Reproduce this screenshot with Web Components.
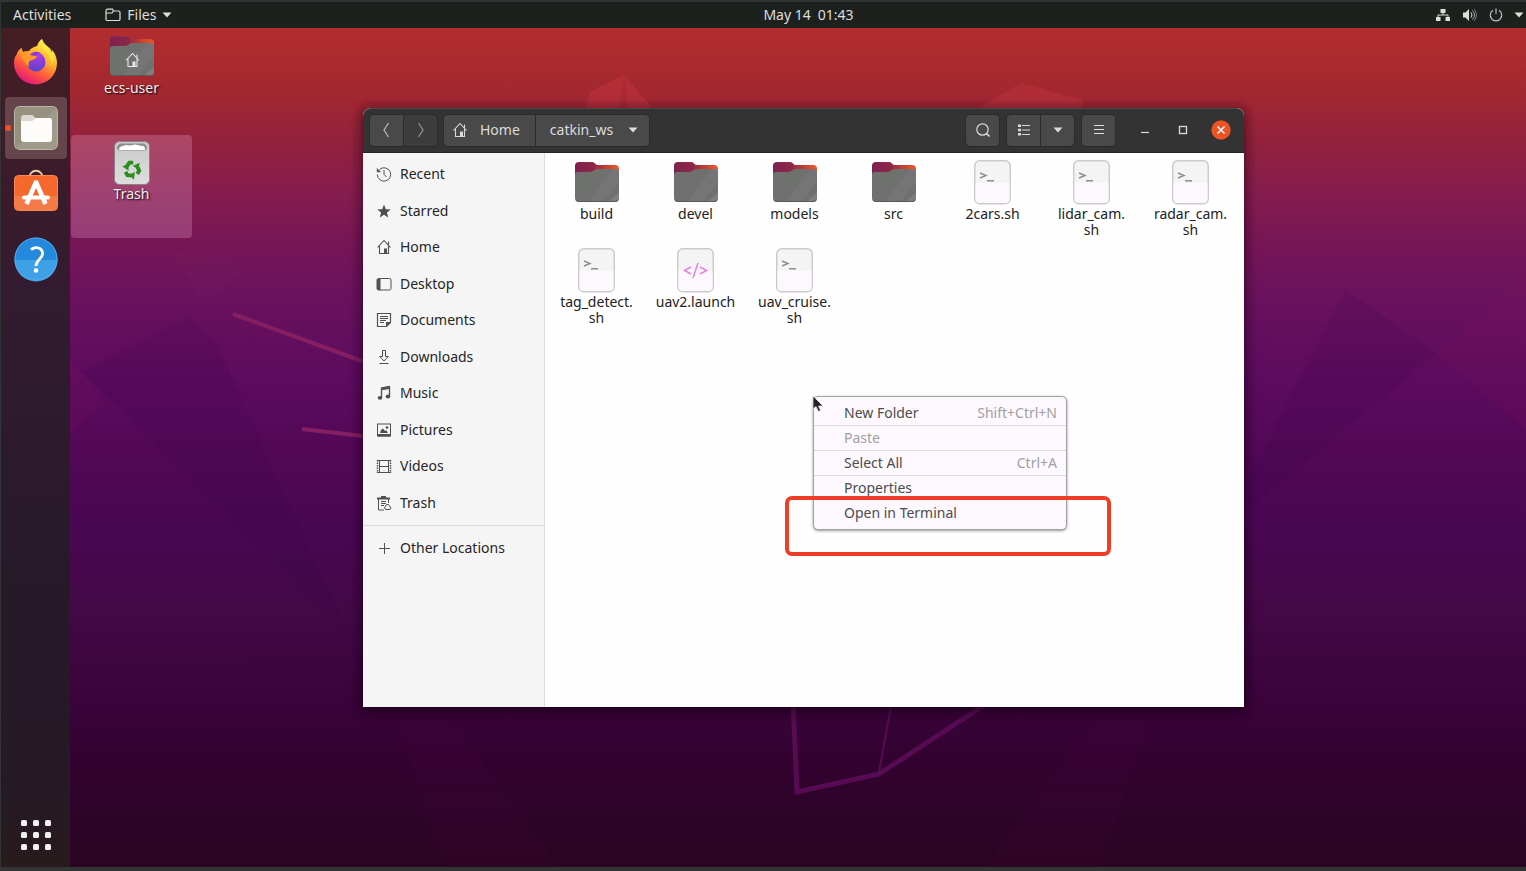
<!DOCTYPE html>
<html lang="en">
<head>
<meta charset="utf-8">
<title>catkin_ws</title>
<style>
  html, body { margin: 0; height: 100%; }
  body { font: 14px/16px "Noto Sans", "Open Sans", sans-serif; overflow: hidden; background: #333535; }
</style>
</head>
<body>
<desktop-shell>
  <top-bar slot="top"></top-bar>
  <app-dock slot="dock"></app-dock>
  <desk-wallpaper></desk-wallpaper>
  <desk-item style="--x:1px;--y:1px" icon="homefolder">ecs-user</desk-item>
  <desk-item style="--x:1px;--y:107px" icon="trashcan" selected>Trash</desk-item>
  <file-window></file-window>
  <context-menu></context-menu>
  <highlight-box></highlight-box>
</desktop-shell>

<script>
const FOLDER = `<defs><linearGradient id="b" x1="0" x2="1"><stop offset="0" stop-color="#7c2458"/><stop offset=".55" stop-color="#a8323c"/><stop offset="1" stop-color="#ef5a26"/></linearGradient></defs>
  <path d="M0 5a4 4 0 0 1 4-4h12c2 0 3 0 4 1.500s2 1.500 4 1.500h16a4 4 0 0 1 4 4v12H0z" fill="url(#b)"/>
  <path d="M4 2h12c2 0 3 0 4 1.500s1 3 0 4c-2 2-2 3-5 3H0V5a4 4 0 0 1 4-3z" fill="#7d2049" opacity=".55"/>
  <path d="M0 14a3 3 0 0 1 3-3h12c4 0 4-3 8-3h17a4 4 0 0 1 4 4v25a4 4 0 0 1-4 4H4a4 4 0 0 1-4-4z" fill="#6f716f"/>
  <path d="M13 41 38 8h2a4 4 0 0 1 4 4v9L28 41z" fill="#777477"/><path d="M33 41 44 32v5a4 4 0 0 1-4 4z" fill="#7f7f7f"/>
  <path d="M1 39a4 4 0 0 0 3 1.500h36a4 4 0 0 0 3-1.500" fill="none" stroke="#5a5a5a"/>`;
const PAGE = `<rect x=".75" y=".75" width="35.500" height="43" rx="5" fill="#f5f4f5" stroke="#cdcacd" stroke-width="1.500"/>
  <path d="M1.500 22.500h34V39a4 4 0 0 1-4 4h-26a4 4 0 0 1-4-4z" fill="#fdf8fe"/>`;
const HOUSE = `<path d="M1.500 8.500 8 1.500l6.500 7M3.500 7v7.500h9V7M12.500 6V2.500" fill="none" stroke="currentColor" stroke-width="1.100"/><path d="M8 9.500h3v5H8z" fill="currentColor"/>`;
const RECYCLE = [0, 120, 240].map(a => `<g transform="translate(18 28.500) rotate(${a})"><path d="M-5.800-2.200-2.600-6.800H1.200" fill="none" stroke="#2c8c1c" stroke-width="3.800"/><path d="M7.800-6.800 6.200-.8.600-3.600z" fill="#2c8c1c"/></g>`).join('');
const ICONS = {
  folder: [44, 44, FOLDER],
  homefolder: [44, 44, FOLDER + `<g transform="translate(14.500 17)" color="#e8e8e8">${HOUSE}</g>`],
  script: [37, 45, PAGE + `<path d="m6 13 6 2.500L6 18" fill="none" stroke="#8d8d8d" stroke-width="1.400"/><path d="M13 20.800h7" stroke="#8d8d8d" stroke-width="1.500"/>`],
  code: [37, 45, PAGE + `<path d="m14 19-6.500 3.500L14 26m9-7 6.500 3.500L23 26M21 15l-5 15" fill="none" stroke="#e382dc" stroke-width="1.500"/>`],
  trashcan: [36, 44, `<defs><linearGradient id="t" x2="0" y2="1"><stop offset="0" stop-color="#c9c9c9"/><stop offset="1" stop-color="#dedede"/></linearGradient></defs>
    <rect x=".5" y=".5" width="35" height="43" rx="5" fill="url(#t)" stroke="#8c8088"/><path d="M3 8c0-4 2-5.500 5-5.500h20c3 0 5 1.500 5 5.500l-2 1.500H5z" fill="#8e8e8e"/>
    <path d="M5 9c0-3 2-4 4-4l3-1 4 .5 5-1 7 1.500c3 0 3 2 3 4z" fill="#fff"/>${RECYCLE}`],
  home: [16, 16, HOUSE],
  recent: [16, 16, `<path d="M3.500 3.500A6.700 6.700 0 1 1 1.300 8.500" fill="none" stroke="currentColor"/><path d="M.8 2v4.300h4.400z" fill="currentColor"/><path d="M8 4v4.500l2.500 2.500" fill="none" stroke="currentColor"/>`],
  star: [16, 16, `<path d="m8 1.500 1.800 4.700 5 .2-3.900 3.200 1.300 4.900L8 11.700l-4.200 2.800 1.300-4.900L1.200 6.400l5-.2z" fill="currentColor"/>`],
  desktop: [16, 16, `<rect x="1" y="2.500" width="14" height="11.500" rx="1.500" fill="none" stroke="currentColor"/><path d="M1 3h3.500v11H1z" fill="currentColor"/>`],
  documents: [16, 16, `<path d="M1.500 1.500h13v9l-4 4h-9z" fill="none" stroke="currentColor" stroke-width="1.200"/><path d="M4 4.500h8M4 6.500h8M4 8.500h6M4 10.500h4" stroke="currentColor"/><path d="M10 15v-5h5z" fill="currentColor"/>`],
  downloads: [16, 16, `<path d="M6.500 1.500h3v6h2.700L8 12 3.800 7.500h2.700zM3.500 14.500h9" fill="none" stroke="currentColor"/>`],
  music: [16, 16, `<path d="M5.500 12.500V3l8-1.500V11" fill="none" stroke="currentColor" stroke-width="1.300"/><path d="M5.500 2.500l8-1.500v3l-8 1.300z" fill="currentColor"/><ellipse cx="4" cy="12.800" rx="2.300" ry="1.900" fill="currentColor"/><ellipse cx="12" cy="11.500" rx="2.300" ry="1.900" fill="currentColor"/>`],
  pictures: [16, 16, `<rect x="1.500" y="2" width="13" height="12" fill="none" stroke="currentColor"/><path d="M2 12h12v2.500H2zM4 11l1-3 2-1.500L9 9l1-1 2 3z" fill="currentColor"/><circle cx="11" cy="5.500" r="1.300" fill="currentColor"/>`],
  videos: [16, 16, `<path d="M1.500 2v13M14.500 2v13" stroke="currentColor" stroke-width="1.500" stroke-dasharray="1.500 1"/><path d="M1 2.500h14M1 14.500h14M3.500 2v13M12.500 2v13M4 8.500h8" stroke="currentColor" fill="none"/>`],
  trash: [16, 16, `<path d="M1 2.500h13v2H1zM5 1h5v2H5z" fill="currentColor"/><path d="M2.500 4v11H8M12.500 4v4M5 6.500h5M5 8.500h5M5 10.500h3" stroke="currentColor" fill="none"/><path d="M9.500 14.500 8.500 13l2-3.500h2l2.500 3.500-1 1.500z" stroke="currentColor" fill="none"/>`],
  plus: [16, 16, `<path d="M8.500 3v11M3 8.500h11" stroke="currentColor" fill="none"/>`],
  prev: [16, 18, `<path d="M9.500 2 5 9l4.500 7" fill="none" stroke="#b4b4b4" stroke-width="1.300"/>`],
  next: [16, 18, `<path d="M5.500 2 10 9l-4.500 7" fill="none" stroke="currentColor" stroke-width="1.300"/>`],
  caret: [10, 6, `<path d="M.5.5h9L5 5.500z" fill="currentColor"/>`],
  search: [16, 16, `<circle cx="7.500" cy="7.500" r="5.700" fill="none" stroke="currentColor" stroke-width="1.200"/><path d="m11.500 11.500 3 3" stroke="currentColor" stroke-width="1.700"/>`],
  list: [14, 14, `<path d="M1 1.500h3v2.500H1zM1 5.800h3v2.500H1zM1 10h3v2.500H1z" fill="currentColor"/><path d="M5 2.500h8M5 7h8M5 11.500h8" stroke="currentColor" stroke-width="1.200"/>`],
  menu: [12, 12, `<path d="M1 1.500h10M1 5.500h10M1 9.500h10" stroke="currentColor" stroke-width="1.200"/>`],
  minimize: [10, 10, `<path d="M1 7.500h8" stroke="currentColor" stroke-width="1.200"/>`],
  maximize: [10, 10, `<rect x="1.500" y="1.500" width="7" height="7" fill="none" stroke="currentColor" stroke-width="1.300"/>`],
  close: [20, 20, `<circle cx="10" cy="10" r="9.700" fill="#ed5424"/><path d="m6.500 6.500 7 7m0-7-7 7" stroke="#fff" stroke-width="1.500"/>`],
  smallfolder: [16, 14, `<path d="M1 3.500V11a1.500 1.500 0 0 0 1.500 1.500h11A1.500 1.500 0 0 0 15 11V4.500A1.500 1.500 0 0 0 13.500 3H8.500L7.500 1.200H2.500A1.500 1.500 0 0 0 1 2.500V5h6l1.500-2" fill="none" stroke="currentColor" stroke-width="1.200"/>`],
  network: [16, 14, `<path d="M5.500 1h5v4h-5zM1 9h4.500v4H1zM10.500 9H15v4h-4.500z" fill="currentColor"/><path d="M8 5v2M3 9V7h10v2" stroke="currentColor" fill="none"/>`],
  volume: [16, 14, `<path d="M1 4.500h2.500L7 1v12L3.500 9.500H1z" fill="currentColor"/><path d="M9 4.500q2 2.500 0 5" fill="none" stroke="currentColor"/><path d="M10.500 2.500q4 4.500 0 9" fill="none" stroke="#aaa"/><path d="M12 1q5 6 0 12" fill="none" stroke="#777"/>`],
  power: [14, 14, `<path d="M4 2.300a5.700 5.700 0 1 0 6 0M7 .5V6" fill="none" stroke="#bcbcbc" stroke-width="1.200"/>`],
  firefox: [44, 48, `<defs>
      <linearGradient id="f" x1=".8" y1=".1" x2=".3" y2="1"><stop offset="0" stop-color="#fff04a"/><stop offset=".35" stop-color="#ffb02e"/><stop offset=".65" stop-color="#ff5a3c"/><stop offset="1" stop-color="#e3127f"/></linearGradient>
      <radialGradient id="p" cx=".6" cy=".1" r=".9"><stop offset="0" stop-color="#b53be8"/><stop offset="1" stop-color="#5a44c8"/></radialGradient></defs>
    <path d="M8 10c0 1 0 3 1 4 2-1 4-1 6-1 2-3 5-4 8-5 1-3 3-6 5-7 1 4 4 6 7 9 1 1 2 3 2 5 1-1 1-2 1-3 3 3 5 8 5 13a21 21 0 0 1-43 0c0-4 1-7 3-9 0-2 2-5 5-6z" fill="url(#f)"/>
    <path d="M28 1c-1 5 0 9 4 13 5 5 6 9 4 14 6-5 4-13 0-18-4-3-7-5-8-9z" fill="#fff04a" opacity=".6"/>
    <circle cx="22" cy="24" r="9.500" fill="url(#p)"/>
    <path d="M8 10c0 2 0 3 1 4 3-1 6 0 8 3 2 0 5 0 6 2-2 3-7 3-8 5-1 2 0 4 0 5-4-3-7-9-9-13 0-2 1-5 2-6z" fill="#ff9a26"/>
    <path d="M16 17c3-4 8-4 12-1-4-1-6 0-7 2z" fill="#8a36d8"/>`],
  files: [44, 44, `<rect x=".5" y=".5" width="43" height="43" rx="5" fill="#96907f" stroke="#b9b5a7"/><path d="M43 1 1 43h38a4 4 0 0 0 4-4z" fill="#9f9a8a"/>
    <path d="M7 12a3 3 0 0 1 3-3h8c2 0 2 3 4 3h13a3 3 0 0 1 3 3v5H7z" fill="#dcd8cf"/><path d="M7 15h11c2 0 2-3 5-3h12a3 3 0 0 1 3 3v18a3 3 0 0 1-3 3H10a3 3 0 0 1-3-3z" fill="#fefcfa"/>`],
  software: [44, 50, `<path d="M15 10C15-1 29-1 29 10" fill="none" stroke="#e9cfa8" stroke-width="1.800"/><rect x=".5" y="6.500" width="43" height="35" rx="4" fill="#f4682c" stroke="#fb8a52"/><path d="M1 27h42v10a4 4 0 0 1-4 4H5a4 4 0 0 1-4-4z" fill="#f47b47"/>
    <path d="M22.500 12 12.500 35M21.500 12l10 23" stroke="#fff" stroke-width="4.600"/><path d="M10 28.500h24" stroke="#fff" stroke-width="4" stroke-linecap="round"/>`],
  help: [44, 47, `<circle cx="22" cy="22" r="21.500" fill="#2488dc"/><path d="M.5 23h43a21.500 21.500 0 0 1-43 0z" fill="#3ea0e6"/><circle cx="22" cy="22" r="21" fill="none" stroke="#55a9ea"/>
    <path d="M17 12.500c6-4 12-1 11.500 4.500-.5 5-6.500 6-6.500 12" fill="none" stroke="#fff" stroke-width="2.800"/><circle cx="22" cy="33.500" r="2.300" fill="#fff"/>`],
  grid: [30, 30, [0, 12, 24].map(y => [0, 12, 24].map(x => `<rect x="${x}" y="${y}" width="6" height="6" rx="1.500" fill="#f2f0f2"/>`).join('')).join('')]
};

const define = (name, html, setup) => customElements.define(name, class extends HTMLElement {
  constructor() {
    super();
    const t = document.createElement('template');
    t.innerHTML = html;
    this.attachShadow({ mode: 'open' }).append(t.content.cloneNode(true));
  }
  connectedCallback() { if (setup) setup(this, this.shadowRoot); }
});

const BUTTON = `button { all: unset; box-sizing: border-box; cursor: default; }`;

define('ui-icon', `<style>:host { display: block; flex: none; } svg { display: block; }</style>`, (host, root) => {
  const [w, h, body] = ICONS[host.getAttribute('name')];
  root.innerHTML += `<svg width="${w}" height="${h}" viewBox="0 0 ${w} ${h}" aria-hidden="true">${body}</svg>`;
});

define('desktop-shell', `<style>
  :host { display: grid; grid-template: 26px 1fr / 69px 1fr; height: 100vh; box-sizing: border-box; border: solid #333535; border-width: 2px 0 4px 1px; }
  .top { grid-column: 1 / -1; }
  .desk { position: relative; overflow: hidden; min-width: 0; }
</style>
<div class="top"><slot name="top"></slot></div><slot name="dock"></slot><main class="desk"><slot></slot></main>`);

define('top-bar', `<style>${BUTTON}
  :host { display: flex; align-items: center; height: 26px; background: #1d211e; color: #dededc; }
  .side { flex: 1; display: flex; align-items: center; }
  .left { padding-left: 12px; gap: 34px; }
  .right { justify-content: flex-end; gap: 11px; padding-right: 2px; }
  button { display: flex; align-items: center; gap: 6px; }
  .clock { padding-left: 80px; gap: 7px; }
</style>
<div class="side left"><button>Activities</button><button><ui-icon name="smallfolder"></ui-icon>Files<ui-icon name="caret"></ui-icon></button></div>
<button class="clock"><span>May 14</span><span>01:43</span></button>
<div class="side right"><ui-icon name="network"></ui-icon><ui-icon name="volume"></ui-icon><ui-icon name="power"></ui-icon><ui-icon name="caret"></ui-icon></div>`);

define('app-dock', `<style>${BUTTON}
  :host { display: flex; flex-direction: column; align-items: center; gap: 4px; padding: 3px 0 8px; box-sizing: border-box;
    background: linear-gradient(#451e24, #3c1b2a 16%, #331b30 32%, #261a29 66%, #251926 90%, #281b1c); }
  button { position: relative; width: 62px; height: 62px; display: grid; place-items: center; border-radius: 4px; }
  .on { background: #65444b; }
  .on::before { content: ""; position: absolute; left: 0; top: 28px; width: 6px; height: 6px; border-radius: 3px; background: #ed5424; }
  .all { margin-top: auto; height: 48px; }
</style>
<button aria-label="Firefox"><ui-icon name="firefox"></ui-icon></button>
<button class="on" aria-label="Files"><ui-icon name="files"></ui-icon></button>
<button aria-label="Software"><ui-icon name="software"></ui-icon></button>
<button aria-label="Help"><ui-icon name="help"></ui-icon></button>
<button class="all" aria-label="Show Applications"><ui-icon name="grid"></ui-icon></button>`);

define('desk-wallpaper', `<style>:host { position: absolute; inset: 0; } svg { display: block; width: 100%; height: 100%; }</style>
<svg viewBox="70 28 1456 839" preserveAspectRatio="none" aria-hidden="true">
  <defs><linearGradient id="sky" x2="0" y2="1">
    <stop offset="0" stop-color="#b12d2f"/><stop offset=".07" stop-color="#a4282f"/><stop offset=".14" stop-color="#92213f"/><stop offset=".2" stop-color="#841c4f"/>
    <stop offset=".26" stop-color="#761657"/><stop offset=".33" stop-color="#68115e"/><stop offset=".42" stop-color="#5c0b5e"/><stop offset=".5" stop-color="#530857"/>
    <stop offset=".6" stop-color="#490752"/><stop offset=".7" stop-color="#430845"/><stop offset=".8" stop-color="#3a043b"/><stop offset=".87" stop-color="#330230"/>
    <stop offset=".93" stop-color="#2e042b"/><stop offset="1" stop-color="#2a0423"/></linearGradient></defs>
  <path d="M70 28h1456v839H70z" fill="url(#sky)"/>
  <path d="m172 250 32 55 45-40z" fill="#fff" opacity=".01"/>
  <path d="m190 315 18 20 8 8 134 295L82 372z" fill="#2d0048" opacity=".11"/>
  <path d="m70 360 35 40-35 35z" fill="#a01858" opacity=".08"/>
  <path d="m1345 290 92 63-189 157v-30z" fill="#2d0048" opacity=".11"/>
  <path d="m1437 353 89-78v155z" fill="#a01858" opacity=".08"/>
  <path d="m586 110 4-18 34-17 30 35z" fill="#d23a45" opacity=".35"/><path d="m624 75 4 35h-10z" fill="#8f2038" opacity=".3"/>
  <path d="m975 110 46-27 62 17v10z" fill="#d23a45" opacity=".3"/>
  <path d="m233 314 140 51M302 429l70 8" stroke="#861f62" stroke-width="4" fill="none"/>
  <path d="m793 700 4 92 82-18 110-72" stroke="#560b53" stroke-width="5" fill="none"/><path d="m892 700-13 72" stroke="#560b53" stroke-width="2"/>
  <path d="m395 720 55 0 110 147H445z" fill="#6a0a50" opacity=".06"/><path d="m1095 720h55l-50 147H985z" fill="#6a0a50" opacity=".06"/>
</svg>`);

define('desk-item', `<style>${BUTTON}
  :host { position: absolute; left: var(--x); top: var(--y); width: 121px; height: 103px; border-radius: 4px; color: #f0ecee; text-shadow: 1px 1px 2px #000; }
  :host([selected]) { background: rgba(255, 200, 240, .22); }
  button { display: flex; flex-direction: column; align-items: center; gap: 1px; width: 100%; padding-top: 6px; }
  .pic { height: 44px; display: grid; place-items: center; }
</style><button><span class="pic"></span><slot></slot></button>`, (host, root) => {
  root.querySelector('.pic').innerHTML = `<ui-icon name="${host.getAttribute('icon')}"></ui-icon>`;
});

define('file-window', `<style>
  :host { position: absolute; left: 293px; top: 80px; width: 881px; height: 599px; display: flex; flex-direction: column;
    border-radius: 8px 8px 0 0; box-shadow: 0 2px 6px rgba(0,0,0,.3), 0 3px 0 10px rgba(20,0,20,.06), 0 3px 14px rgba(0,0,0,.35); background: #fefefe; }
  .body { flex: 1; display: flex; min-height: 0; }
</style>
<window-header></window-header><div class="body"><places-sidebar></places-sidebar><file-grid></file-grid></div>`);

define('window-header', `<style>${BUTTON}
  :host { display: flex; align-items: center; height: 45px; box-sizing: border-box; padding: 0 13px 1px 7px; background: #333; color: #dcdcdc;
    border-radius: 8px 8px 0 0; border-top: 1px solid #4a4a4a; border-bottom: 1px solid #242424; }
  .group { display: flex; border-radius: 4px; box-shadow: 0 0 0 1px #2b2b2b; background: #2b2b2b; gap: 1px; overflow: hidden; }
  .group button { height: 31px; min-width: 33px; box-sizing: border-box; display: flex; align-items: center; justify-content: center; background: #494949; }
  .group .off { background: #3b3c3b; color: #8f8f8f; }
  .path { margin-left: 7px; }
  .path button { padding: 0 15px 0 8px; gap: 12px; }
  .path .here { padding: 0 11px 0 14px; gap: 15px; }
  .tools { margin-left: auto; display: flex; gap: 8px; }
  .win { display: flex; align-items: center; margin-left: 25px; gap: 28px; }
  .win button:last-child { margin-left: -5px; }
  .win button { display: grid; }
</style>
<div class="group"><button aria-label="Back"><ui-icon name="prev"></ui-icon></button><button class="off" aria-label="Forward"><ui-icon name="next"></ui-icon></button></div>
<div class="group path"><button><ui-icon name="home"></ui-icon>Home</button><button class="here">catkin_ws<ui-icon name="caret"></ui-icon></button></div>
<div class="tools">
  <div class="group"><button aria-label="Search"><ui-icon name="search"></ui-icon></button></div>
  <div class="group"><button aria-label="List view"><ui-icon name="list"></ui-icon></button><button aria-label="View options"><ui-icon name="caret"></ui-icon></button></div>
  <div class="group"><button aria-label="Menu"><ui-icon name="menu"></ui-icon></button></div>
</div>
<div class="win"><button aria-label="Minimize"><ui-icon name="minimize"></ui-icon></button><button aria-label="Maximize"><ui-icon name="maximize"></ui-icon></button><button aria-label="Close"><ui-icon name="close"></ui-icon></button></div>`);

define('places-sidebar', `<style>
  :host { display: block; flex: none; width: 182px; box-sizing: border-box; background: #f5f5f5; border-right: 1px solid #dcdcdc; padding-top: 3px; }
  ul { list-style: none; margin: 0; padding: 0; display: grid; grid-auto-rows: 1fr; height: 365px; }
  a { display: flex; align-items: center; gap: 8px; height: 100%; padding-left: 13px; color: #262626; text-decoration: none; }
  ui-icon { color: #505050; }
  .other { border-top: 1px solid #dcdcdc; margin-top: 4px; padding-top: 4px; }
  .other a { height: 36px; }
</style><nav><ul></ul><div class="other"><a href="#other"><ui-icon name="plus"></ui-icon>Other Locations</a></div></nav>`, (host, root) => {
  root.querySelector('ul').innerHTML = ['Recent', 'Starred', 'Home', 'Desktop', 'Documents', 'Downloads', 'Music', 'Pictures', 'Videos', 'Trash']
    .map(n => `<li><a href="#${n}"><ui-icon name="${n === 'Starred' ? 'star' : n.toLowerCase()}"></ui-icon>${n}</a></li>`).join('');
});

define('file-item', `<style>${BUTTON}
  :host { display: block; color: #222; text-align: center; }
  button { display: flex; flex-direction: column; align-items: center; gap: 1px; width: 100%; }
  .pic { height: 45px; display: grid; place-items: center; }
</style><button><span class="pic"></span><span><slot></slot></span></button>`, (host, root) => {
  root.querySelector('.pic').innerHTML = `<ui-icon name="${host.getAttribute('icon')}"></ui-icon>`;
});

define('file-grid', `<style>
  :host { flex: 1; display: grid; grid-template-columns: repeat(auto-fill, 99px); align-content: start; row-gap: 10px; padding: 7px 2px; }
</style>
<file-item icon="folder">build</file-item><file-item icon="folder">devel</file-item><file-item icon="folder">models</file-item><file-item icon="folder">src</file-item>
<file-item icon="script">2cars.sh</file-item><file-item icon="script">lidar_cam.<br>sh</file-item><file-item icon="script">radar_cam.<br>sh</file-item>
<file-item icon="script">tag_detect.<br>sh</file-item><file-item icon="code">uav2.launch</file-item><file-item icon="script">uav_cruise.<br>sh</file-item>`);

define('context-menu', `<style>${BUTTON}
  :host { position: absolute; left: 743px; top: 368px; width: 254px; box-sizing: border-box; padding: 4px 0 3px; background: #fdf8fd;
    border: 1px solid #a3a0a3; border-radius: 5px; box-shadow: 0 1px 3px rgba(0,0,0,.4); color: #4c4c4c; }
  button { display: flex; align-items: center; justify-content: space-between; width: 100%; height: 25px; padding: 0 9px 0 30px; border-bottom: 1px solid transparent; }
  .line { border-color: #dedade; }
  span, :disabled { color: #a0a0a0; }
  svg { position: absolute; left: -2px; top: -2px; }
</style>
<button class="line">New Folder<span>Shift+Ctrl+N</span></button><button class="line" disabled>Paste</button>
<button class="line">Select All<span>Ctrl+A</span></button><button>Properties</button><button>Open in Terminal</button>
<svg width="12" height="18" viewBox="0 0 12 18" aria-hidden="true"><path d="M1 1v13l3-2.500 2.500 5 2-1L6.500 11H11z" fill="#222" stroke="#ddd" stroke-width=".8"/></svg>`);

define('highlight-box', `<style>
  :host { position: absolute; left: 715px; top: 468px; width: 326px; height: 60px; box-sizing: border-box; border: 4px solid #ef3e28; border-radius: 7px; pointer-events: none; }
</style>`);
</script>
</body>
</html>
